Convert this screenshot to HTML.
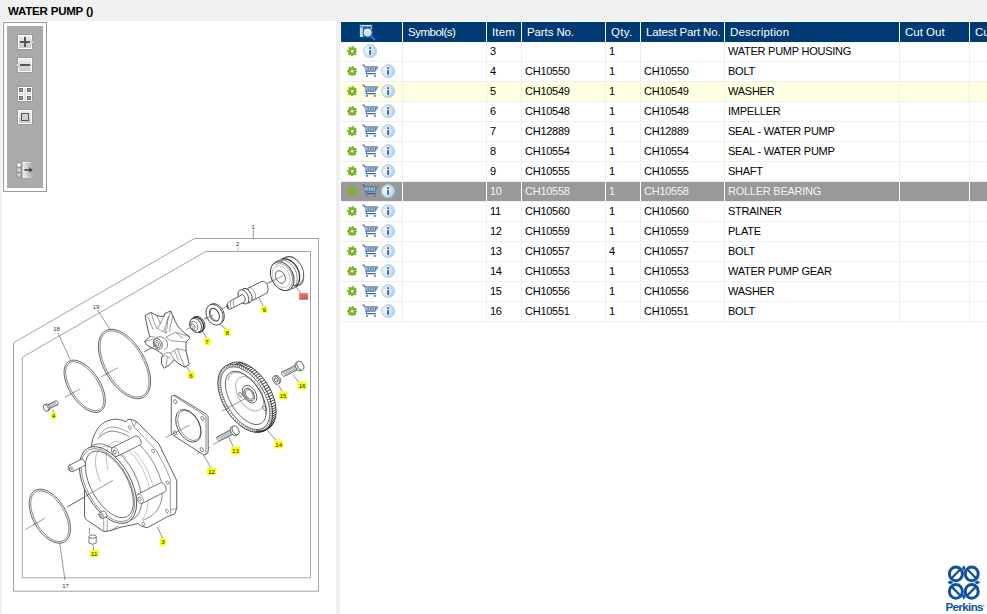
<!DOCTYPE html>
<html lang="en">
<head>
<meta charset="utf-8">
<title>WATER PUMP ()</title>
<style>
html,body{margin:0;padding:0;}
body{width:987px;height:614px;overflow:hidden;background:#f0f0f0;position:relative;font-family:"Liberation Sans",sans-serif;font-size:11px;color:#000;}
#title{position:absolute;left:8px;top:3px;height:16px;line-height:16px;font-size:11.5px;font-weight:bold;color:#000;white-space:nowrap;letter-spacing:-0.2px;}
#left{position:absolute;left:2px;top:21px;width:334px;height:593px;background:#fff;overflow:hidden;}
#right{position:absolute;left:340px;top:21px;width:647px;height:593px;background:#fff;overflow:hidden;}
#grid{position:absolute;left:1px;top:1px;width:660px;height:300px;}
.hrow{position:absolute;left:0;top:0;height:20px;width:660px;}
.hc{position:absolute;top:0;height:20px;background:#003a73;color:#fff;font-size:11.5px;line-height:20px;white-space:nowrap;overflow:hidden;}
.hc span{position:absolute;left:5px;top:0;}
.row{position:absolute;left:0;height:19px;width:660px;border-bottom:1px solid #efefef;background:#fff;}
.row.hov{background:#ffffe1;}
.row.sel{background:#999;color:#f4f4f4;}
.c{position:absolute;top:0;height:19px;line-height:19px;border-right:1px solid #efefef;white-space:nowrap;overflow:hidden;}
.row.sel .c{border-right-color:#fff;}
.c span{position:absolute;left:3px;top:0;letter-spacing:-0.25px;}
.c0 svg{position:absolute;}
.ic-gear{left:5.5px;top:3.5px;}
.ic-cart{left:21px;top:1.5px;}
.ic-info{left:39.5px;top:1.5px;}
.ic-info.nocart{left:21.5px;}
.ic-find{position:absolute;left:18px;top:2px;}
#toolbar{position:absolute;left:0;top:0;}
#diagram{position:absolute;left:0;top:0;}
#logo{position:absolute;left:600px;top:539px;}

</style>
</head>
<body>
<svg width="0" height="0" style="position:absolute"><defs><radialGradient id="g-info" cx="0.35" cy="0.45" r="0.7"><stop offset="0" stop-color="#f6fafd"/><stop offset="0.5" stop-color="#d9e7f4"/><stop offset="1" stop-color="#a2c6e6"/></radialGradient></defs></svg>
<div id="title">WATER PUMP ()</div>
<div id="left">
<svg id="toolbar" width="46" height="172" viewBox="2 21 46 172">
<defs>
<linearGradient id="g-btn" x1="0" y1="0" x2="0" y2="1"><stop offset="0" stop-color="#ededed"/><stop offset="1" stop-color="#c9c9c9"/></linearGradient>
<linearGradient id="g-exp" x1="0" y1="0" x2="1" y2="0"><stop offset="0" stop-color="#f2f2f2"/><stop offset="0.45" stop-color="#cfcfcf"/><stop offset="1" stop-color="#aaaaaa"/></linearGradient>
<linearGradient id="g-expl" x1="0" y1="0" x2="1" y2="0"><stop offset="0" stop-color="#ffffff"/><stop offset="0.55" stop-color="#e6e6e6"/><stop offset="1" stop-color="#aaaaaa"/></linearGradient>
</defs>
<rect x="3.5" y="22.5" width="43" height="169" fill="#fff" stroke="#999"/>
<rect x="7" y="26" width="36" height="162" fill="#aaa"/>
<!-- plus -->
<rect x="17.5" y="34.5" width="15" height="15" rx="1" fill="#8a8a8a"/>
<rect x="18" y="35" width="14" height="14" fill="#fff"/>
<rect x="19" y="36" width="12" height="12" fill="url(#g-btn)"/>
<rect x="20" y="41" width="10" height="2" fill="#555"/>
<rect x="24" y="37" width="2" height="10" fill="#555"/>
<path d="M32 39.6 L34.3 42 L32 44.4Z" fill="#f4f4f4" stroke="#8a8a8a" stroke-width="0.7"/>
<!-- minus -->
<rect x="17.5" y="57.5" width="15" height="15" rx="1" fill="#8a8a8a"/>
<rect x="18" y="58" width="14" height="14" fill="#fff"/>
<rect x="19" y="59" width="12" height="12" fill="url(#g-btn)"/>
<rect x="20" y="64" width="10" height="2" fill="#555"/>
<path d="M18 62.6 L15.7 65 L18 67.4Z" fill="#f4f4f4" stroke="#8a8a8a" stroke-width="0.7"/>
<!-- grid -->
<rect x="17.5" y="86.5" width="15" height="15" rx="1" fill="#8a8a8a"/>
<rect x="18" y="87" width="14" height="14" fill="#fff"/>
<rect x="24" y="88" width="2" height="12" fill="#e2e2e2"/>
<rect x="19" y="93" width="12" height="2" fill="#e2e2e2"/>
<g fill="#999" stroke="#6e6e6e" stroke-width="1">
<rect x="19.5" y="88.5" width="3" height="3"/><rect x="27.5" y="88.5" width="3" height="3"/>
<rect x="19.5" y="96.5" width="3" height="3"/><rect x="27.5" y="96.5" width="3" height="3"/>
</g>
<!-- square -->
<rect x="17.5" y="109.5" width="15" height="15" rx="1" fill="#8a8a8a"/>
<rect x="18" y="110" width="14" height="14" fill="#fff"/>
<rect x="19" y="111" width="12" height="12" fill="url(#g-btn)"/>
<rect x="21.5" y="113.5" width="7" height="7" fill="#d0d0d0" stroke="#555" stroke-width="1"/>
<!-- export -->
<rect x="22" y="162" width="11" height="15.5" fill="url(#g-exp)"/>
<path d="M33 162.5 H22.5 V177 H33" fill="none" stroke="url(#g-expl)" stroke-width="1"/>
<path d="M22 162V178" stroke="#888" stroke-width="1"/>
<g stroke="#8a8a8a" stroke-width="0.8">
<rect x="16.9" y="162.9" width="4.2" height="4.2" fill="#f4f4f4"/>
<rect x="16.9" y="167.9" width="4.2" height="4.2" fill="#d6d6d6"/>
<rect x="16.9" y="172.9" width="4.2" height="4.2" fill="#d0d0d0"/>
</g>
<path d="M24.3 169.9 H30.5" stroke="#444" stroke-width="1.6"/>
<path d="M29.3 167 L32.8 169.9 L29.3 172.8Z" fill="#444"/>
</svg>

<svg id="diagram" width="334" height="593" viewBox="2 21 334 593" font-family="'Liberation Sans',sans-serif">
<g fill="none" stroke="#989898" stroke-width="0.9">
<path d="M13.5 591.2 V342.8 L194.4 238.5 H318.5 V591.2 Z"/>
<path d="M22.3 577.8 V357.3 L205.7 251.5 H310.5 V577.8 Z"/>
</g>
<path d="M253.4 230.0 L253.4 238.5" fill="none" stroke="#555" stroke-width="0.6"/>
<path d="M237.8 246.5 L237.8 251.5" fill="none" stroke="#999" stroke-width="0.6"/>
<text x="253.2" y="229.4" text-anchor="middle" font-size="6" fill="#333">1</text>
<text x="237.6" y="245.8" text-anchor="middle" font-size="6" fill="#333">2</text>
<path d="M65.0 397.3 L80.2 388.9" fill="none" stroke="#555" stroke-width="0.6"/>
<path d="M101.4 376.8 L117.9 367.7" fill="none" stroke="#555" stroke-width="0.6"/>
<path d="M144.3 351.8 L157.0 344.8" fill="none" stroke="#555" stroke-width="0.6"/>
<path d="M25.2 529.7 L44.9 518.2" fill="none" stroke="#555" stroke-width="0.6"/>
<path d="M67.1 507.0 L113.7 480.6" fill="none" stroke="#555" stroke-width="0.6"/>
<path d="M204.0 318.5 L214.0 313.5" fill="none" stroke="#555" stroke-width="0.6"/>
<path d="M222.5 308.5 L228.5 305.5" fill="none" stroke="#555" stroke-width="0.6"/>
<path d="M267.0 283.5 L284.0 274.5" fill="none" stroke="#555" stroke-width="0.6"/>
<path d="M190.0 328.0 L199.0 323.5" fill="none" stroke="#555" stroke-width="0.6"/>
<path d="M197.0 453.5 L210.0 447.5" fill="none" stroke="#555" stroke-width="0.6"/>
<path d="M213.0 444.5 L219.0 441.5" fill="none" stroke="#555" stroke-width="0.6"/>
<path d="M275.5 381.5 L281.5 378.0" fill="none" stroke="#555" stroke-width="0.6"/>
<path d="M89.5 528.0 L89.5 534.0" fill="none" stroke="#555" stroke-width="0.6"/>
<ellipse cx="124.5" cy="364.0" rx="38.4" ry="20.5" transform="rotate(60.0 124.5 364.0)" fill="none" stroke="#3a3a3a" stroke-width="0.7" />
<ellipse cx="124.5" cy="364.0" rx="36.7" ry="18.8" transform="rotate(60.0 124.5 364.0)" fill="none" stroke="#3a3a3a" stroke-width="0.55" />
<ellipse cx="84.7" cy="386.3" rx="29.6" ry="15.4" transform="rotate(57.0 84.7 386.3)" fill="none" stroke="#3a3a3a" stroke-width="0.7" />
<ellipse cx="84.7" cy="386.3" rx="27.9" ry="13.7" transform="rotate(57.0 84.7 386.3)" fill="none" stroke="#3a3a3a" stroke-width="0.55" />
<ellipse cx="49.8" cy="516.2" rx="29.7" ry="16.7" transform="rotate(60.0 49.8 516.2)" fill="none" stroke="#3a3a3a" stroke-width="0.7" />
<ellipse cx="49.8" cy="516.2" rx="28.0" ry="15.0" transform="rotate(60.0 49.8 516.2)" fill="none" stroke="#3a3a3a" stroke-width="0.55" />
<path d="M58.0 333.0 L70.2 359.4" fill="none" stroke="#555" stroke-width="0.6"/>
<path d="M97.5 310.0 L110.5 330.2" fill="none" stroke="#555" stroke-width="0.6"/>
<path d="M59.7 543.0 L65.0 580.0" fill="none" stroke="#555" stroke-width="0.6"/>
<text x="56.5" y="331.0" text-anchor="middle" font-size="6" fill="#333">18</text>
<text x="96.0" y="308.6" text-anchor="middle" font-size="6" fill="#333">19</text>
<text x="65.6" y="588.4" text-anchor="middle" font-size="6" fill="#333">17</text>
<path d="M49.6 408.6 L58.1 404.6 Q58.3 402.1 56.3 400.6 L47.8 404.7" fill="#fff" stroke="#3a3a3a" stroke-width="0.7" stroke-linejoin="round" />
<path d="M56.9 405.1 L54.6 401.5" fill="none" stroke="#444" stroke-width="0.5"/>
<path d="M55.8 405.7 L53.4 402.0" fill="none" stroke="#444" stroke-width="0.5"/>
<path d="M54.6 406.2 L52.2 402.6" fill="none" stroke="#444" stroke-width="0.5"/>
<path d="M53.4 406.8 L51.0 403.1" fill="none" stroke="#444" stroke-width="0.5"/>
<path d="M52.3 407.3 L49.9 403.7" fill="none" stroke="#444" stroke-width="0.5"/>
<path d="M51.1 407.9 L48.7 404.2" fill="none" stroke="#444" stroke-width="0.5"/>
<ellipse cx="47.2" cy="407.3" rx="2.2" ry="3.6" transform="rotate(154.7 47.2 407.3)" fill="#fff" stroke="#3a3a3a" stroke-width="0.7" />
<ellipse cx="45.8" cy="408.0" rx="2.2" ry="3.6" transform="rotate(154.7 45.8 408.0)" fill="#fff" stroke="#3a3a3a" stroke-width="0.7" />
<path d="M295.9 365.1 L281.5 372.2 Q281.5 374.9 283.7 376.6 L298.1 369.5" fill="#fff" stroke="#3a3a3a" stroke-width="0.7" stroke-linejoin="round" />
<path d="M282.7 371.6 L285.4 375.8" fill="none" stroke="#444" stroke-width="0.5"/>
<path d="M283.8 371.0 L286.6 375.2" fill="none" stroke="#444" stroke-width="0.5"/>
<path d="M285.0 370.4 L287.7 374.6" fill="none" stroke="#444" stroke-width="0.5"/>
<path d="M286.2 369.9 L288.9 374.1" fill="none" stroke="#444" stroke-width="0.5"/>
<path d="M287.3 369.3 L290.1 373.5" fill="none" stroke="#444" stroke-width="0.5"/>
<path d="M288.5 368.7 L291.2 372.9" fill="none" stroke="#444" stroke-width="0.5"/>
<path d="M289.7 368.1 L292.4 372.3" fill="none" stroke="#444" stroke-width="0.5"/>
<path d="M290.8 367.6 L293.6 371.7" fill="none" stroke="#444" stroke-width="0.5"/>
<path d="M292.0 367.0 L294.7 371.2" fill="none" stroke="#444" stroke-width="0.5"/>
<path d="M293.2 366.4 L295.9 370.6" fill="none" stroke="#444" stroke-width="0.5"/>
<path d="M294.3 365.8 L297.1 370.0" fill="none" stroke="#444" stroke-width="0.5"/>
<ellipse cx="298.7" cy="366.4" rx="3.0" ry="4.8" transform="rotate(-26.3 298.7 366.4)" fill="#fff" stroke="#3a3a3a" stroke-width="0.7" />
<ellipse cx="300.4" cy="365.6" rx="3.0" ry="4.8" transform="rotate(-26.3 300.4 365.6)" fill="#fff" stroke="#3a3a3a" stroke-width="0.7" />
<path d="M231.1 429.7 L216.7 437.0 Q216.7 439.7 218.9 441.4 L233.3 434.1" fill="#fff" stroke="#3a3a3a" stroke-width="0.7" stroke-linejoin="round" />
<path d="M217.8 436.4 L220.6 440.6" fill="none" stroke="#444" stroke-width="0.5"/>
<path d="M219.0 435.8 L221.8 440.0" fill="none" stroke="#444" stroke-width="0.5"/>
<path d="M220.2 435.2 L222.9 439.4" fill="none" stroke="#444" stroke-width="0.5"/>
<path d="M221.3 434.6 L224.1 438.8" fill="none" stroke="#444" stroke-width="0.5"/>
<path d="M222.5 434.1 L225.3 438.2" fill="none" stroke="#444" stroke-width="0.5"/>
<path d="M223.6 433.5 L226.4 437.6" fill="none" stroke="#444" stroke-width="0.5"/>
<path d="M224.8 432.9 L227.6 437.0" fill="none" stroke="#444" stroke-width="0.5"/>
<path d="M226.0 432.3 L228.7 436.4" fill="none" stroke="#444" stroke-width="0.5"/>
<path d="M227.1 431.7 L229.9 435.9" fill="none" stroke="#444" stroke-width="0.5"/>
<path d="M228.3 431.1 L231.1 435.3" fill="none" stroke="#444" stroke-width="0.5"/>
<path d="M229.4 430.5 L232.2 434.7" fill="none" stroke="#444" stroke-width="0.5"/>
<ellipse cx="233.9" cy="431.1" rx="3.0" ry="4.8" transform="rotate(-26.8 233.9 431.1)" fill="#fff" stroke="#3a3a3a" stroke-width="0.7" />
<ellipse cx="235.6" cy="430.2" rx="3.0" ry="4.8" transform="rotate(-26.8 235.6 430.2)" fill="#fff" stroke="#3a3a3a" stroke-width="0.7" />
<ellipse cx="277.2" cy="379.6" rx="2.9" ry="4.4" transform="rotate(-25.0 277.2 379.6)" fill="#fff" stroke="#3a3a3a" stroke-width="0.7" />
<ellipse cx="276.0" cy="380.2" rx="2.9" ry="4.4" transform="rotate(-25.0 276.0 380.2)" fill="#fff" stroke="#3a3a3a" stroke-width="0.7" />
<ellipse cx="276.0" cy="380.2" rx="1.4" ry="2.3" transform="rotate(-25.0 276.0 380.2)" fill="none" stroke="#3a3a3a" stroke-width="0.7" />
<path d="M274.4 262.8 L284.6 257.4 Q293.8 253.6 300.2 264.4 Q306 276.2 302 283.8 L291.4 289.4" fill="#fff" stroke="#3a3a3a" stroke-width="0.8" stroke-linejoin="round" />
<ellipse cx="292.0" cy="271.1" rx="10.8" ry="15.2" transform="rotate(-27.0 292.0 271.1)" fill="#fff" stroke="#3a3a3a" stroke-width="0.7" />
<path d="M282.7 259.1 L283.8 258.9 L285.0 258.9 L286.2 259.0 L287.5 259.3 L288.7 259.8 L289.9 260.4 L291.1 261.1 L292.3 262.0 L293.4 263.0 L294.5 264.1 L295.5 265.3 L296.4 266.6 L297.2 267.9 L297.9 269.4 L298.5 270.8 L299.0 272.3 L299.3 273.8 L299.5 275.3 L299.6 276.8 L299.6 278.2 L299.4 279.6 L299.2 281.0 L298.8 282.2 L298.2 283.3 L297.6 284.3 L296.8 285.3 L296.0 286.0" fill="none" stroke="#3a3a3a" stroke-width="1.3"/>
<path d="M280.3 260.3 L281.4 260.1 L282.6 260.1 L283.8 260.2 L285.1 260.5 L286.3 261.0 L287.5 261.6 L288.7 262.3 L289.9 263.2 L291.0 264.2 L292.1 265.3 L293.1 266.5 L294.0 267.8 L294.8 269.1 L295.5 270.6 L296.1 272.0 L296.6 273.5 L296.9 275.0 L297.1 276.5 L297.2 278.0 L297.2 279.4 L297.0 280.8 L296.8 282.2 L296.4 283.4 L295.8 284.5 L295.2 285.5 L294.4 286.5 L293.6 287.2" fill="none" stroke="#3a3a3a" stroke-width="0.6"/>
<ellipse cx="282.2" cy="276.2" rx="10.8" ry="15.2" transform="rotate(-27.0 282.2 276.2)" fill="#fff" stroke="#3a3a3a" stroke-width="0.9" />
<path d="M275.7 264.8 L276.5 264.3 L277.5 263.9 L278.4 263.7 L279.5 263.6 L280.5 263.7 L281.6 263.9 L282.7 264.3 L283.8 264.7 L284.9 265.4 L285.9 266.1 L286.9 267.0 L287.9 267.9 L288.8 269.0 L289.6 270.1 L290.4 271.4 L291.0 272.6 L291.5 273.9 L292.0 275.3 L292.3 276.6 L292.5 277.9 L292.6 279.3 L292.6 280.5 L292.5 281.8 L292.3 283.0 L291.9 284.1 L291.4 285.1 L290.9 286.0 L290.2 286.8 L289.4 287.4 L288.6 288.0 L287.7 288.4" fill="none" stroke="#3a3a3a" stroke-width="0.5"/>
<ellipse cx="281.2" cy="276.7" rx="8.2" ry="11.6" transform="rotate(-27.0 281.2 276.7)" fill="none" stroke="#777" stroke-width="0.4" />
<ellipse cx="280.4" cy="277.0" rx="4.6" ry="6.6" transform="rotate(-27.0 280.4 277.0)" fill="none" stroke="#3a3a3a" stroke-width="0.7" />
<path d="M267.6 283.6 L283.6 275.3" fill="none" stroke="#555" stroke-width="0.6"/>
<path d="M247.6 288.5 L261.4 281.5 Q265.6 280.6 267.6 285.4 Q269 290.4 267.1 292.9 L252.5 300.6 Z" fill="#fff" stroke="#3a3a3a" stroke-width="0.8" stroke-linejoin="round" />
<ellipse cx="246.6" cy="295.5" rx="4.7" ry="7.6" transform="rotate(-27.0 246.6 295.5)" fill="#fff" stroke="#3a3a3a" stroke-width="0.8" />
<path d="M243.2 289.0 L246.4 288.3 M247.6 303.3 L250.4 302.1" fill="none" stroke="#3a3a3a" stroke-width="0.7" stroke-linejoin="round" />
<ellipse cx="243.4" cy="296.9" rx="4.7" ry="7.6" transform="rotate(-27.0 243.4 296.9)" fill="#fff" stroke="#3a3a3a" stroke-width="0.8" />
<path d="M248.7 287.2 L249.2 287.2 L249.8 287.4 L250.3 287.6 L250.8 287.9 L251.4 288.2 L251.9 288.6 L252.4 289.1 L252.9 289.6 L253.4 290.2 L253.8 290.8 L254.2 291.4 L254.5 292.1 L254.8 292.8 L255.1 293.5 L255.3 294.2 L255.4 294.9 L255.5 295.6 L255.6 296.2 L255.6 296.9 L255.5 297.5 L255.4 298.1 L255.2 298.6 L254.9 299.1 L254.6 299.5 L254.3 299.9" fill="none" stroke="#3a3a3a" stroke-width="0.5"/>
<path d="M242.6 294.4 L229 301.7 Q227 303.2 226.7 306 Q227.2 309.6 229.9 309.3 L245.0 301.6 Q246.4 297.4 242.6 294.4Z" fill="#fff" stroke="#3a3a3a" stroke-width="0.8" stroke-linejoin="round" />
<path d="M230.8 302 Q229.6 305.6 231.6 308.5 M233.6 300.6 Q232.6 304 234.4 307" fill="none" stroke="#3a3a3a" stroke-width="0.5" stroke-linejoin="round" />
<path d="M227.2 304.6 L228.6 308.6" fill="none" stroke="#3a3a3a" stroke-width="1.2" stroke-linejoin="round" />
<ellipse cx="215.8" cy="314.0" rx="8.0" ry="10.9" transform="rotate(-25.0 215.8 314.0)" fill="#fff" stroke="#3a3a3a" stroke-width="0.8" />
<ellipse cx="214.5" cy="314.7" rx="8.0" ry="10.9" transform="rotate(-25.0 214.5 314.7)" fill="#fff" stroke="#3a3a3a" stroke-width="0.8" />
<ellipse cx="214.4" cy="314.7" rx="4.5" ry="6.8" transform="rotate(-25.0 214.4 314.7)" fill="none" stroke="#3a3a3a" stroke-width="0.9" />
<path d="M217.4 320.5 L216.9 320.6 L216.4 320.5 L215.9 320.4 L215.3 320.3 L214.8 320.0 L214.3 319.7 L213.8 319.4 L213.3 319.0 L212.8 318.5 L212.4 318.0 L212.0 317.4 L211.6 316.8 L211.3 316.2 L211.0 315.5 L210.8 314.8 L210.6 314.2 L210.5 313.5 L210.4 312.8 L210.4 312.2 L210.5 311.6 L210.6 311.0 L210.7 310.4 L210.9 309.9 L211.2 309.5 L211.5 309.1 L211.9 308.7" fill="none" stroke="#3a3a3a" stroke-width="0.6"/>
<path d="M204.5 319.6 L213.5 315.0" fill="none" stroke="#555" stroke-width="0.6"/>
<ellipse cx="198.6" cy="324.0" rx="5.9" ry="8.0" transform="rotate(-27.0 198.6 324.0)" fill="#fff" stroke="#3a3a3a" stroke-width="0.8" />
<ellipse cx="197.2" cy="324.7" rx="5.9" ry="8.0" transform="rotate(-27.0 197.2 324.7)" fill="#fff" stroke="#3a3a3a" stroke-width="1.4" />
<ellipse cx="195.6" cy="325.4" rx="5.5" ry="7.4" transform="rotate(-27.0 195.6 325.4)" fill="#fff" stroke="#3a3a3a" stroke-width="0.8" />
<ellipse cx="194.0" cy="326.0" rx="3.6" ry="4.9" transform="rotate(-27.0 194.0 326.0)" fill="#fff" stroke="#3a3a3a" stroke-width="0.6" />
<ellipse cx="192.6" cy="326.6" rx="2.3" ry="3.1" transform="rotate(-27.0 192.6 326.6)" fill="#fff" stroke="#3a3a3a" stroke-width="0.6" />
<ellipse cx="191.8" cy="327.0" rx="1.3" ry="1.8" transform="rotate(-27.0 191.8 327.0)" fill="#fff" stroke="#3a3a3a" stroke-width="0.5" />
<path d="M186.5 329.6 L191.0 327.0" fill="none" stroke="#555" stroke-width="0.6"/>
<path d="M145.1 315.4 L151.1 312.4 L157.1 315.9 L163.6 316.5 L165.3 313.2 L170.7 311 L172.9 315.9 Q175 322 178.4 326.8 Q183 332.6 189.3 336.6 L189.8 338.3 L186 342.1 L186 350.8 L189.3 364.5 L184.9 367.2 Q178.6 364.6 174 359.5 L170.7 363.9 L164.2 368.3 L161.5 363.9 L161.5 357.4 L163.1 354.6 L156.6 350 L152.2 348.1 L147.3 345.4 L144.5 341.5 L150 336.6 L148.9 333.9 L146.2 321.4 Z" fill="#fff" stroke="#3a3a3a" stroke-width="0.85" stroke-linejoin="round" />
<path d="M151.1 312.4 L153.6 321 L157.1 329 M146.6 316.6 L148.6 318 L153 329.6 M157.1 315.9 L160.6 324 M165.3 313.2 L161.4 321.4 L157.6 328.5 L163.4 332 M170.7 311 L167.6 321 L166.9 329 M168.5 316 L165.7 326 L164.8 329 M172.9 315.9 L170.4 326 L169.6 332 M165.8 337.2 L175.6 332.3 L189.3 336.6 M165.8 337.2 L170.7 340.6 L186 342.1 M175.6 332.3 L183 338.6 M170.2 353 L177.3 348.6 L186 350.8 M177.3 348.6 L181 358 L184.9 367.2 M174.6 350.4 L178.4 360.6 M144.5 341.5 L150.4 340 L153.4 338.4 M150 336.6 L154.6 337 M163.1 354.6 L167 352.4 L170.2 353 L174 359.5 M161.5 357.4 L165.6 355.8 L170.6 358.2 M167.4 357 L166 366.6" fill="none" stroke="#3a3a3a" stroke-width="0.5" stroke-linejoin="round" />
<path d="M153.3 339.9 Q156 336.6 159.8 336.6 Q164.6 337.4 166.4 340 Q168 344 167.5 346.5 Q166.4 349 164.2 349.7" fill="none" stroke="#3a3a3a" stroke-width="0.6" stroke-linejoin="round" />
<ellipse cx="157.8" cy="343.9" rx="4.1" ry="5.6" transform="rotate(-27.0 157.8 343.9)" fill="#fff" stroke="#3a3a3a" stroke-width="0.7" />
<ellipse cx="157.4" cy="344.1" rx="2.7" ry="3.8" transform="rotate(-27.0 157.4 344.1)" fill="#fff" stroke="#3a3a3a" stroke-width="0.6" />
<ellipse cx="157.2" cy="344.2" rx="1.3" ry="2.0" transform="rotate(-27.0 157.2 344.2)" fill="none" stroke="#3a3a3a" stroke-width="0.6" />
<ellipse cx="165.3" cy="331.2" rx="1.2" ry="1.8" transform="rotate(-27.0 165.3 331.2)" fill="none" stroke="#3a3a3a" stroke-width="0.6" />
<path d="M144.3 351.8 L156.0 345.2" fill="none" stroke="#555" stroke-width="0.6"/>
<path d="M171.3 397.4 Q171.2 395.4 173.6 395.6 L175.5 395.4 L206.6 414.4 Q208.2 415.4 208.1 417.4 L208.2 451.4 Q208.1 453.2 206 454.4 L203.9 455 L172.6 435 Q171.2 434 171.2 432 Z" fill="#fff" stroke="#3a3a3a" stroke-width="0.8" stroke-linejoin="round" />
<path d="M173.6 395.6 L204.6 415.2 Q206 416.3 206 418 L206 454.2" fill="none" stroke="#3a3a3a" stroke-width="0.6" stroke-linejoin="round" />
<ellipse cx="188.4" cy="425.8" rx="17.6" ry="11.0" transform="rotate(62.0 188.4 425.8)" fill="none" stroke="#3a3a3a" stroke-width="0.8" />
<ellipse cx="189.2" cy="425.5" rx="16.2" ry="9.8" transform="rotate(62.0 189.2 425.5)" fill="none" stroke="#3a3a3a" stroke-width="0.5" />
<ellipse cx="175.2" cy="401.7" rx="1.4" ry="2.2" transform="rotate(-25.0 175.2 401.7)" fill="none" stroke="#3a3a3a" stroke-width="0.6" />
<ellipse cx="202.4" cy="418.3" rx="1.4" ry="2.2" transform="rotate(-25.0 202.4 418.3)" fill="none" stroke="#3a3a3a" stroke-width="0.6" />
<ellipse cx="175.0" cy="432.7" rx="1.4" ry="2.2" transform="rotate(-25.0 175.0 432.7)" fill="none" stroke="#3a3a3a" stroke-width="0.6" />
<ellipse cx="201.8" cy="449.6" rx="1.4" ry="2.2" transform="rotate(-25.0 201.8 449.6)" fill="none" stroke="#3a3a3a" stroke-width="0.6" />
<path d="M165.3 437.8 L189.6 425.1" fill="none" stroke="#555" stroke-width="0.6"/>
<ellipse cx="248.8" cy="396.2" rx="37.8" ry="22.2" transform="rotate(58.5 248.8 396.2)" fill="#fff" stroke="#3a3a3a" stroke-width="0.8" />
<ellipse cx="245.2" cy="398.2" rx="37.8" ry="22.2" transform="rotate(58.5 245.2 398.2)" fill="#fff" stroke="#3a3a3a" stroke-width="0.8" />
<path d="M265.0 430.4L263.4 427.9M263.5 431.2L262.1 428.5M261.9 431.8L260.7 429.1M260.2 432.2L259.2 429.4M258.5 432.4L257.7 429.5M256.7 432.4L256.1 429.5M254.8 432.3L254.4 429.3M252.8 431.9L252.7 429.0M250.9 431.4L250.9 428.4M248.8 430.6L249.1 427.7M246.8 429.7L247.3 426.8M244.8 428.6L245.4 425.8M242.7 427.4L243.6 424.6M240.7 425.9L241.8 423.3M238.7 424.4L240.0 421.8M236.7 422.6L238.2 420.2M234.8 420.8L236.4 418.5M232.9 418.8L234.8 416.6M231.1 416.7L233.1 414.7M229.4 414.5L231.6 412.6M227.8 412.2L230.1 410.5M226.3 409.8L228.7 408.3M224.8 407.4L227.3 406.1M223.5 404.9L226.1 403.8M222.4 402.3L225.0 401.5M221.3 399.8L224.0 399.1M220.4 397.2L223.2 396.8M219.6 394.7L222.4 394.5M218.9 392.1L221.8 392.1M218.4 389.6L221.3 389.9M218.1 387.2L220.9 387.6M217.9 384.8L220.7 385.4M217.8 382.5L220.6 383.3M218.0 380.2L220.7 381.3M218.2 378.1L220.9 379.4M218.6 376.1L221.2 377.6M219.2 374.2L221.6 375.9M219.9 372.4L222.2 374.3M220.7 370.8L222.9 372.8M221.7 369.4L223.8 371.5M222.8 368.1L224.8 370.4M224.1 366.9L225.8 369.4M225.4 366.0L227.0 368.5M226.9 365.2L228.3 367.9M228.5 364.6L229.7 367.3M230.2 364.2L231.2 367.0M231.9 364.0L232.7 366.9M233.7 364.0L234.3 366.9M235.6 364.1L236.0 367.1M237.6 364.5L237.7 367.4M239.5 365.0L239.5 368.0M241.6 365.8L241.3 368.7M243.6 366.7L243.1 369.6M245.6 367.8L245.0 370.6M247.7 369.0L246.8 371.8M249.7 370.5L248.6 373.1M251.7 372.0L250.4 374.6M253.7 373.8L252.2 376.2M255.6 375.6L254.0 377.9M257.5 377.6L255.6 379.8M259.3 379.7L257.3 381.7M261.0 381.9L258.8 383.8M262.6 384.2L260.3 385.9M264.1 386.6L261.7 388.1M265.6 389.0L263.1 390.3M266.9 391.5L264.3 392.6M268.0 394.1L265.4 394.9M269.1 396.6L266.4 397.3M270.0 399.2L267.2 399.6M270.8 401.7L268.0 401.9M271.5 404.3L268.6 404.3M272.0 406.8L269.1 406.5M272.3 409.2L269.5 408.8M272.5 411.6L269.7 411.0M272.6 413.9L269.8 413.1M272.4 416.2L269.7 415.1M272.2 418.3L269.5 417.0M271.8 420.3L269.2 418.8M271.2 422.2L268.8 420.5M270.5 424.0L268.2 422.1M269.7 425.6L267.5 423.6M268.7 427.0L266.6 424.9M267.6 428.3L265.6 426.0M266.3 429.5L264.6 427.0" fill="none" stroke="#333" stroke-width="0.6" stroke-linejoin="round" />
<path d="M265.0 430.4L268.6 428.4M263.5 431.2L267.1 429.2M261.9 431.8L265.5 429.8M260.2 432.2L263.8 430.2M258.5 432.4L262.1 430.4M256.7 432.4L260.3 430.4M254.8 432.3L258.4 430.3M235.6 364.1L239.2 362.1M237.6 364.5L241.2 362.5M239.5 365.0L243.1 363.0M241.6 365.8L245.2 363.8M243.6 366.7L247.2 364.7M245.6 367.8L249.2 365.8M247.7 369.0L251.3 367.0M249.7 370.5L253.3 368.5M251.7 372.0L255.3 370.0M253.7 373.8L257.3 371.8M255.6 375.6L259.2 373.6M257.5 377.6L261.1 375.6M259.3 379.7L262.9 377.7M261.0 381.9L264.6 379.9M262.6 384.2L266.2 382.2M264.1 386.6L267.7 384.6M265.6 389.0L269.2 387.0M266.9 391.5L270.5 389.5M268.0 394.1L271.6 392.1M269.1 396.6L272.7 394.6M270.0 399.2L273.6 397.2M270.8 401.7L274.4 399.7M271.5 404.3L275.1 402.3M272.0 406.8L275.6 404.8M272.3 409.2L275.9 407.2M272.5 411.6L276.1 409.6M272.6 413.9L276.2 411.9M272.4 416.2L276.0 414.2M272.2 418.3L275.8 416.3M271.8 420.3L275.4 418.3M271.2 422.2L274.8 420.2M270.5 424.0L274.1 422.0M269.7 425.6L273.3 423.6M268.7 427.0L272.3 425.0M267.6 428.3L271.2 426.3M266.3 429.5L269.9 427.5" fill="none" stroke="#1a1a1a" stroke-width="0.85" stroke-linejoin="round" />
<ellipse cx="245.2" cy="398.2" rx="34.8" ry="19.4" transform="rotate(58.5 245.2 398.2)" fill="none" stroke="#3a3a3a" stroke-width="0.6" />
<ellipse cx="245.8" cy="397.9" rx="29.8" ry="15.6" transform="rotate(58.5 245.8 397.9)" fill="none" stroke="#3a3a3a" stroke-width="0.7" />
<path d="M227.9 380.3 L228.3 378.5 L229.0 376.9 L229.8 375.4 L230.9 374.3 L232.1 373.4 L233.4 372.7 L234.9 372.3 L236.6 372.2 L238.3 372.4 L240.2 372.8 L242.1 373.5 L244.1 374.5 L246.1 375.7 L248.1 377.2 L250.1 378.9 L252.0 380.7 L253.9 382.8 L255.7 385.0 L257.5 387.4 L259.1 389.9 L260.6 392.4 L261.9 395.0 L263.0 397.7 L264.0 400.3 L264.8 402.9 L265.4 405.4 L265.8 407.9 L266.0 410.2 L265.9 412.4 L265.7 414.5" fill="none" stroke="#3a3a3a" stroke-width="0.5"/>
<ellipse cx="249.6" cy="393.8" rx="19.0" ry="11.6" transform="rotate(58.5 249.6 393.8)" fill="none" stroke="#555" stroke-width="0.45" />
<ellipse cx="249.6" cy="394.2" rx="9.6" ry="6.2" transform="rotate(58.5 249.6 394.2)" fill="none" stroke="#3a3a3a" stroke-width="0.7" />
<ellipse cx="249.2" cy="394.6" rx="7.0" ry="4.4" transform="rotate(58.5 249.2 394.6)" fill="none" stroke="#3a3a3a" stroke-width="0.8" />
<ellipse cx="249.4" cy="394.5" rx="5.2" ry="3.2" transform="rotate(58.5 249.4 394.5)" fill="none" stroke="#3a3a3a" stroke-width="0.6" />
<ellipse cx="240.4" cy="394.5" rx="1.5" ry="2.4" transform="rotate(-27.0 240.4 394.5)" fill="none" stroke="#3a3a3a" stroke-width="0.6" />
<ellipse cx="264.6" cy="408.3" rx="1.5" ry="2.4" transform="rotate(-27.0 264.6 408.3)" fill="none" stroke="#3a3a3a" stroke-width="0.6" />
<path d="M221.4 411.4 L248.0 397.0" fill="none" stroke="#555" stroke-width="0.6"/>
<path d="M125.9 421.7 L127.6 419.6 L130.8 419.2 L136.6 421.7 L159.1 444.2 L170.8 468.6 L176.7 480.4 L176.7 508.6 L174.7 514 L166.9 516.9 L147.4 527.7 L141.5 526.2 L138.2 523.6 L120 527.4 L110.3 530.8 L103.7 531.5 L89.5 521.8 Q84.6 519.6 84.5 515 L84.5 488 L92.5 439.3 C94.5 434 96.5 430 99.3 426.6 C102.5 423.2 105.5 421.3 109.1 420.3 C112 419.4 114.5 419.1 116.9 419.3 C120 419.6 123 420.5 125.9 421.7 Z" fill="#fff" stroke="#3a3a3a" stroke-width="0.8" stroke-linejoin="round" />
<path d="M130.8 419.2 L133.7 426.6 L156.2 450.1 L166 468.6 L170.3 479.4 L170.3 510.4 L174.7 508.9 M170.3 510.4 L171 515.4 M136.6 421.7 L133.7 426.6" fill="none" stroke="#3a3a3a" stroke-width="0.5" stroke-linejoin="round" />
<path d="M174.9 509 L176.6 508.2" fill="none" stroke="#3a3a3a" stroke-width="0.6" stroke-linejoin="round" />
<ellipse cx="129.8" cy="427.6" rx="1.3" ry="1.9" transform="rotate(-25.0 129.8 427.6)" fill="none" stroke="#3a3a3a" stroke-width="0.5" />
<ellipse cx="153.2" cy="451.0" rx="1.3" ry="1.9" transform="rotate(-25.0 153.2 451.0)" fill="none" stroke="#3a3a3a" stroke-width="0.5" />
<ellipse cx="167.4" cy="482.7" rx="1.3" ry="1.9" transform="rotate(-25.0 167.4 482.7)" fill="none" stroke="#3a3a3a" stroke-width="0.5" />
<ellipse cx="166.9" cy="511.0" rx="1.3" ry="1.9" transform="rotate(-25.0 166.9 511.0)" fill="none" stroke="#3a3a3a" stroke-width="0.5" />
<ellipse cx="143.5" cy="523.8" rx="1.3" ry="1.9" transform="rotate(-25.0 143.5 523.8)" fill="none" stroke="#3a3a3a" stroke-width="0.5" />
<path d="M99.3 435.8 C99.8 435.1 101.3 432.6 102.5 431.4 C103.7 430.2 105.0 429.3 106.2 428.6 C107.5 427.9 108.7 427.6 110.0 427.3 C111.3 427.1 112.2 426.9 114.0 427.1 C115.8 427.4 118.5 427.9 121.0 428.8 C123.5 429.7 127.4 431.9 128.7 432.5" fill="none" stroke="#3a3a3a" stroke-width="0.5" stroke-linejoin="round" />
<path d="M97.6 438.6 C98.7 437.8 101.8 434.8 104.0 433.6 C106.2 432.4 108.3 431.4 111.0 431.2 C113.7 431.0 116.9 431.7 120.0 432.6 C123.1 433.5 128.0 435.9 129.6 436.6" fill="none" stroke="#3a3a3a" stroke-width="0.6" stroke-linejoin="round" />
<path d="M139.5 444.4 C140.6 445.7 143.9 449.3 146.0 452.0 C148.1 454.7 150.4 457.6 152.3 460.8 C154.2 464.0 156.1 467.5 157.6 471.0 C159.1 474.5 160.9 480.2 161.6 482.0" fill="none" stroke="#3a3a3a" stroke-width="0.6" stroke-linejoin="round" />
<path d="M162.0 493.5 C161.9 494.8 162.1 498.5 161.4 501.0 C160.7 503.5 159.6 506.2 158.0 508.6 C156.4 511.0 154.5 513.5 152.0 515.4 C149.5 517.3 144.5 519.5 143.0 520.3" fill="none" stroke="#3a3a3a" stroke-width="0.6" stroke-linejoin="round" />
<path d="M126.0 447.6 C127.5 449.2 132.2 453.4 135.0 457.0 C137.8 460.6 140.5 464.9 142.6 469.0 C144.7 473.1 146.4 478.3 147.6 481.6 C148.8 484.9 149.3 487.8 149.6 489.0" fill="none" stroke="#666" stroke-width="0.4" stroke-linejoin="round" />
<path d="M147.8 499.6 C147.7 500.8 147.8 504.6 147.4 507.0 C147.0 509.4 146.5 511.7 145.6 514.0 C144.7 516.3 142.6 519.5 142.0 520.6" fill="none" stroke="#666" stroke-width="0.4" stroke-linejoin="round" />
<path d="M134.0 451.0 C135.3 452.6 139.2 456.9 141.6 460.6 C144.0 464.3 146.7 468.8 148.6 473.0 C150.5 477.2 152.3 483.5 153.0 485.6" fill="none" stroke="#666" stroke-width="0.4" stroke-linejoin="round" />
<path d="M103.7 531.5 L103.8 518.6 M107.2 531.2 L107.2 520.2 M110.3 530.8 L118.4 525.9" fill="none" stroke="#3a3a3a" stroke-width="0.5" stroke-linejoin="round" />
<ellipse cx="113.0" cy="482.2" rx="42.0" ry="23.0" transform="rotate(61.0 113.0 482.2)" fill="#fff" stroke="#3a3a3a" stroke-width="0.6" />
<ellipse cx="108.0" cy="485.0" rx="42.0" ry="23.0" transform="rotate(61.0 108.0 485.0)" fill="#fff" stroke="#3a3a3a" stroke-width="0.75" />
<ellipse cx="107.9" cy="485.1" rx="40.0" ry="21.0" transform="rotate(61.0 107.9 485.1)" fill="none" stroke="#3a3a3a" stroke-width="0.5" />
<ellipse cx="109.4" cy="484.4" rx="36.8" ry="18.4" transform="rotate(61.0 109.4 484.4)" fill="none" stroke="#3a3a3a" stroke-width="0.65" />
<path d="M100.5 482.1 L99.0 478.7 L97.9 475.2 L96.9 471.9 L96.2 468.5 L95.7 465.3 L95.5 462.3 L95.6 459.4 L95.9 456.8 L96.5 454.4 L97.3 452.3 L98.3 450.4 L99.6 448.9 L101.2 447.7 L102.9 446.9 L104.7 446.4 L106.8 446.3 L109.0 446.6 L111.3 447.2 L113.6 448.2 L116.1 449.5 L118.6 451.1 L121.0 453.1 L123.5 455.3 L125.9 457.8" fill="none" stroke="#666" stroke-width="0.45"/>
<path d="M108.4 469.8 L107.4 466.5 L106.7 463.2 L106.3 460.1 L106.1 457.1 L106.2 454.3 L106.5 451.7 L107.1 449.4 L107.9 447.3 L109.0 445.5 L110.3 444.0 L111.8 442.9 L113.5 442.1 L115.4 441.7 L117.4 441.6 L119.6 441.9 L121.9 442.6 L124.2 443.6 L126.6 444.9 L129.1 446.6" fill="none" stroke="#666" stroke-width="0.45"/>
<path d="M117.2 456.3 L139.8 445.1 A3.0 5.0 -26 0 0 135.4 436.1 L112.8 447.3 A3.0 5.0 -26 0 0 117.2 456.3Z" fill="#fff" stroke="#3a3a3a" stroke-width="0.7" stroke-linejoin="round" />
<path d="M112.8 447.3 L113.1 447.2 L113.4 447.1 L113.7 447.1 L114.1 447.2 L114.4 447.3 L114.8 447.4 L115.1 447.6 L115.5 447.8 L115.9 448.1 L116.2 448.4 L116.6 448.8 L116.9 449.1 L117.2 449.6 L117.4 450.0 L117.7 450.5 L117.9 450.9 L118.1 451.4 L118.2 451.9 L118.4 452.4 L118.4 452.9 L118.5 453.4 L118.5 453.8 L118.4 454.2 L118.4 454.6 L118.3 455.0 L118.1 455.4 L117.9 455.6 L117.7 455.9 L117.5 456.1 L117.2 456.3" fill="none" stroke="#3a3a3a" stroke-width="0.5"/>
<ellipse cx="114.7" cy="451.9" rx="1.4" ry="2.0" transform="rotate(-26.4 114.7 451.9)" fill="none" stroke="#3a3a3a" stroke-width="0.6" />
<path d="M142.3 503.3 L164.9 491.9 A3.0 5.0 -27 0 0 160.3 482.9 L137.7 494.3 A3.0 5.0 -27 0 0 142.3 503.3Z" fill="#fff" stroke="#3a3a3a" stroke-width="0.7" stroke-linejoin="round" />
<path d="M137.7 494.3 L138.0 494.2 L138.4 494.2 L138.7 494.1 L139.0 494.2 L139.4 494.3 L139.8 494.4 L140.1 494.6 L140.5 494.8 L140.8 495.1 L141.2 495.4 L141.5 495.7 L141.9 496.1 L142.2 496.6 L142.4 497.0 L142.7 497.4 L142.9 497.9 L143.1 498.4 L143.2 498.9 L143.4 499.4 L143.4 499.9 L143.5 500.3 L143.5 500.8 L143.5 501.2 L143.4 501.6 L143.3 502.0 L143.1 502.3 L143.0 502.6 L142.8 502.9 L142.5 503.1 L142.3 503.3" fill="none" stroke="#3a3a3a" stroke-width="0.5"/>
<ellipse cx="139.7" cy="498.9" rx="1.4" ry="2.0" transform="rotate(-26.8 139.7 498.9)" fill="none" stroke="#3a3a3a" stroke-width="0.6" />
<path d="M72.2 471.8 L84.6 465.6 A2.2 3.6 -27 0 0 81.4 459.2 L69.0 465.4 A2.2 3.6 -27 0 0 72.2 471.8Z" fill="#fff" stroke="#3a3a3a" stroke-width="0.7" stroke-linejoin="round" />
<path d="M69.0 465.4 L69.2 465.3 L69.4 465.2 L69.7 465.2 L69.9 465.3 L70.2 465.3 L70.4 465.4 L70.7 465.6 L71.0 465.7 L71.2 465.9 L71.5 466.2 L71.7 466.4 L71.9 466.7 L72.2 467.0 L72.4 467.3 L72.5 467.6 L72.7 468.0 L72.8 468.3 L72.9 468.7 L73.0 469.0 L73.1 469.4 L73.1 469.7 L73.1 470.0 L73.1 470.3 L73.0 470.6 L73.0 470.9 L72.9 471.1 L72.7 471.4 L72.6 471.5 L72.4 471.7 L72.2 471.8" fill="none" stroke="#3a3a3a" stroke-width="0.5"/>
<ellipse cx="70.3" cy="468.7" rx="1.1" ry="1.6" transform="rotate(-26.6 70.3 468.7)" fill="none" stroke="#3a3a3a" stroke-width="0.6" />
<path d="M102.7 518.5 L105.8 517.0 A2.0 3.3 -26 0 0 103.0 511.0 L99.9 512.5 A2.0 3.3 -26 0 0 102.7 518.5Z" fill="#fff" stroke="#3a3a3a" stroke-width="0.7" stroke-linejoin="round" />
<path d="M99.9 512.5 L100.1 512.5 L100.3 512.4 L100.5 512.4 L100.7 512.4 L100.9 512.5 L101.2 512.6 L101.4 512.7 L101.7 512.9 L101.9 513.1 L102.1 513.3 L102.3 513.5 L102.6 513.8 L102.7 514.0 L102.9 514.3 L103.1 514.6 L103.2 515.0 L103.3 515.3 L103.4 515.6 L103.5 515.9 L103.6 516.2 L103.6 516.5 L103.6 516.8 L103.6 517.1 L103.5 517.4 L103.4 517.6 L103.3 517.9 L103.2 518.1 L103.1 518.2 L102.9 518.4 L102.7 518.5" fill="none" stroke="#3a3a3a" stroke-width="0.5"/>
<ellipse cx="101.0" cy="515.6" rx="1.2" ry="1.7" transform="rotate(-25.8 101.0 515.6)" fill="none" stroke="#3a3a3a" stroke-width="0.6" />
<path d="M67.1 507.0 L113.0 480.3" fill="none" stroke="#555" stroke-width="0.6"/>
<path d="M89 536.6 V543 Q92.6 545.6 96.2 543 V536.6" fill="#fff" stroke="#3a3a3a" stroke-width="0.7" stroke-linejoin="round" />
<ellipse cx="92.6" cy="536.6" rx="3.6" ry="1.7" transform="rotate(0.0 92.6 536.6)" fill="#fff" stroke="#3a3a3a" stroke-width="0.7" />
<path d="M295.0 285.3 L300.6 293.0" fill="none" stroke="#444" stroke-width="0.6"/>
<path d="M259.0 297.8 L263.0 305.8" fill="none" stroke="#444" stroke-width="0.6"/>
<path d="M220.0 324.5 L226.5 329.5" fill="none" stroke="#444" stroke-width="0.6"/>
<path d="M202.5 331.0 L206.5 338.0" fill="none" stroke="#444" stroke-width="0.6"/>
<path d="M186.0 366.0 L190.0 372.0" fill="none" stroke="#444" stroke-width="0.6"/>
<path d="M53.0 409.5 L53.6 412.5" fill="none" stroke="#444" stroke-width="0.6"/>
<path d="M157.6 527.0 L162.4 538.0" fill="none" stroke="#444" stroke-width="0.6"/>
<path d="M93.0 545.5 L93.6 550.0" fill="none" stroke="#444" stroke-width="0.6"/>
<path d="M203.5 455.0 L211.0 468.0" fill="none" stroke="#444" stroke-width="0.6"/>
<path d="M228.8 436.8 L233.0 446.6" fill="none" stroke="#444" stroke-width="0.6"/>
<path d="M267.3 430.6 L276.3 440.5" fill="none" stroke="#444" stroke-width="0.6"/>
<path d="M278.5 385.0 L282.0 391.5" fill="none" stroke="#444" stroke-width="0.6"/>
<path d="M293.0 375.1 L298.8 382.0" fill="none" stroke="#444" stroke-width="0.6"/>
<rect x="299.0" y="293.0" width="9.2" height="7.0" fill="#fa7a7a"/>
<text x="303.6" y="299.0" text-anchor="middle" font-size="6.2" fill="#5a4a4a">10</text>
<rect x="261.2" y="306.0" width="6.0" height="7.0" fill="#ffff00"/>
<text x="264.2" y="312.0" text-anchor="middle" font-size="6.2" fill="#222">9</text>
<rect x="224.2" y="329.0" width="6.0" height="7.0" fill="#ffff00"/>
<text x="227.2" y="335.0" text-anchor="middle" font-size="6.2" fill="#222">8</text>
<rect x="204.0" y="338.0" width="6.0" height="7.0" fill="#ffff00"/>
<text x="207.0" y="344.0" text-anchor="middle" font-size="6.2" fill="#222">7</text>
<rect x="187.8" y="371.6" width="6.4" height="7.0" fill="#ffff00"/>
<text x="191.0" y="377.6" text-anchor="middle" font-size="6.2" fill="#222">6</text>
<rect x="51.0" y="412.2" width="5.0" height="6.8" fill="#ffff00"/>
<text x="53.5" y="418.0" text-anchor="middle" font-size="6.2" fill="#222">4</text>
<rect x="160.0" y="538.0" width="6.0" height="7.4" fill="#ffff00"/>
<text x="163.0" y="544.4" text-anchor="middle" font-size="6.2" fill="#222">3</text>
<rect x="90.0" y="550.0" width="8.4" height="6.6" fill="#ffff00"/>
<text x="94.2" y="555.6" text-anchor="middle" font-size="6.2" fill="#222">11</text>
<rect x="207.0" y="467.8" width="9.2" height="7.0" fill="#ffff00"/>
<text x="211.6" y="473.8" text-anchor="middle" font-size="6.2" fill="#222">12</text>
<rect x="231.0" y="446.7" width="9.0" height="7.7" fill="#ffff00"/>
<text x="235.5" y="453.4" text-anchor="middle" font-size="6.2" fill="#222">13</text>
<rect x="274.4" y="440.6" width="8.6" height="7.8" fill="#ffff00"/>
<text x="278.7" y="447.4" text-anchor="middle" font-size="6.2" fill="#222">14</text>
<rect x="279.0" y="391.6" width="8.2" height="7.6" fill="#ffff00"/>
<text x="283.1" y="398.2" text-anchor="middle" font-size="6.2" fill="#222">15</text>
<rect x="297.8" y="381.9" width="8.6" height="7.4" fill="#ffff00"/>
<text x="302.1" y="388.3" text-anchor="middle" font-size="6.2" fill="#222">16</text>
</svg>
</div>
<div id="right">
<div id="grid">
<div class="hrow">
<div class="hc" style="left:0px;width:61px"><svg class="ic-find" width="17" height="17" viewBox="0 0 17 17"><rect x="0.5" y="0.5" width="13" height="13" fill="#1467b3"/><rect x="1.2" y="1.2" width="11.6" height="1.1" fill="#fff"/><rect x="1.2" y="3.4" width="2.6" height="9.4" fill="#fff"/><rect x="11.6" y="3.4" width="1.2" height="1.2" fill="#fff"/><path d="M2.4 4.4h1M2.4 6.4h1M2.4 8.4h1M2.4 10.4h1" stroke="#1467b3" stroke-width="0.9"/><path d="M11.5 11.6 L15.6 15.4" stroke="#2d72c2" stroke-width="2" stroke-linecap="round"/><circle cx="8.6" cy="8.5" r="4.5" fill="#d9dbde" stroke="#1d63ad" stroke-width="1"/><path d="M6 7 Q8.6 4.6 11 7.2" stroke="#f6f6f6" stroke-width="1.3" fill="none"/></svg></div>
<div class="hc" style="left:62px;width:83px"><span style="letter-spacing:-0.49px">Symbol(s)</span></div>
<div class="hc" style="left:146px;width:34px"><span style="letter-spacing:0.17px">Item</span></div>
<div class="hc" style="left:181px;width:83px"><span style="letter-spacing:-0.11px">Parts No.</span></div>
<div class="hc" style="left:265px;width:34px"><span style="letter-spacing:0.3px">Qty.</span></div>
<div class="hc" style="left:300px;width:83px"><span style="letter-spacing:-0.15px">Latest Part No.</span></div>
<div class="hc" style="left:384px;width:174px"><span style="letter-spacing:0.15px">Description</span></div>
<div class="hc" style="left:559px;width:69px"><span style="letter-spacing:0px">Cut Out</span></div>
<div class="hc" style="left:629px;width:17px"><span style="letter-spacing:0px">Cu</span></div>
</div>
<div class="row" style="top:20px">
<div class="c c0" style="left:0px;width:61px"><svg class="ic-gear" width="10.4" height="10.4" viewBox="0 0 11 11"><circle cx="5.5" cy="5.5" r="2.75" fill="none" stroke="#7fb32a" stroke-width="2.9"/><circle cx="5.5" cy="5.5" r="4.5" fill="none" stroke="#7fb32a" stroke-width="1.9" stroke-dasharray="2 1.534" stroke-dashoffset="1"/></svg><svg class="ic-info nocart" width="14.2" height="14.2" viewBox="0 0 15 15"><circle cx="7.5" cy="7.5" r="6.9" fill="url(#g-info)" stroke="#a9c9e6" stroke-width="0.8"/><rect x="6.6" y="3.4" width="1.9" height="1.9" fill="#2f5f9f"/><rect x="6.6" y="6.4" width="1.9" height="5" fill="#2f5f9f"/></svg></div>
<div class="c c1" style="left:62px;width:83px"><span></span></div>
<div class="c c2" style="left:146px;width:34px"><span>3</span></div>
<div class="c c3" style="left:181px;width:83px"><span></span></div>
<div class="c c4" style="left:265px;width:34px"><span>1</span></div>
<div class="c c5" style="left:300px;width:83px"><span></span></div>
<div class="c c6" style="left:384px;width:174px"><span>WATER PUMP HOUSING</span></div>
<div class="c c7" style="left:559px;width:69px"><span></span></div>
<div class="c c8" style="left:629px;width:17px"><span></span></div>
</div>
<div class="row" style="top:40px">
<div class="c c0" style="left:0px;width:61px"><svg class="ic-gear" width="10.4" height="10.4" viewBox="0 0 11 11"><circle cx="5.5" cy="5.5" r="2.75" fill="none" stroke="#7fb32a" stroke-width="2.9"/><circle cx="5.5" cy="5.5" r="4.5" fill="none" stroke="#7fb32a" stroke-width="1.9" stroke-dasharray="2 1.534" stroke-dashoffset="1"/></svg><svg class="ic-cart" width="17" height="14" viewBox="0 0 17 14"><path d="M0.3 0.8 L2.2 1.4 L3 3 L4.6 9.6 L13.8 9.6" fill="none" stroke="#3b669f" stroke-width="1.1"/><path d="M2.9 2.9 H15.7 L13.2 7.2 H4" fill="#eef3f9" stroke="#3b669f" stroke-width="1"/><path d="M5 3.4V6.8M6.7 3.4V6.8M8.4 3.4V6.8M10.1 3.4V6.8M11.8 3.4V6.8M13.5 3.4V6.2" stroke="#3b669f" stroke-width="0.9" fill="none"/><path d="M3.6 5 H14.4" stroke="#7d9cc4" stroke-width="0.6"/><circle cx="4.9" cy="11.9" r="1.1" fill="#4a90d9"/><circle cx="12.9" cy="11.9" r="1.1" fill="#4a90d9"/></svg><svg class="ic-info" width="14.2" height="14.2" viewBox="0 0 15 15"><circle cx="7.5" cy="7.5" r="6.9" fill="url(#g-info)" stroke="#a9c9e6" stroke-width="0.8"/><rect x="6.6" y="3.4" width="1.9" height="1.9" fill="#2f5f9f"/><rect x="6.6" y="6.4" width="1.9" height="5" fill="#2f5f9f"/></svg></div>
<div class="c c1" style="left:62px;width:83px"><span></span></div>
<div class="c c2" style="left:146px;width:34px"><span>4</span></div>
<div class="c c3" style="left:181px;width:83px"><span>CH10550</span></div>
<div class="c c4" style="left:265px;width:34px"><span>1</span></div>
<div class="c c5" style="left:300px;width:83px"><span>CH10550</span></div>
<div class="c c6" style="left:384px;width:174px"><span>BOLT</span></div>
<div class="c c7" style="left:559px;width:69px"><span></span></div>
<div class="c c8" style="left:629px;width:17px"><span></span></div>
</div>
<div class="row hov" style="top:60px">
<div class="c c0" style="left:0px;width:61px"><svg class="ic-gear" width="10.4" height="10.4" viewBox="0 0 11 11"><circle cx="5.5" cy="5.5" r="2.75" fill="none" stroke="#7fb32a" stroke-width="2.9"/><circle cx="5.5" cy="5.5" r="4.5" fill="none" stroke="#7fb32a" stroke-width="1.9" stroke-dasharray="2 1.534" stroke-dashoffset="1"/></svg><svg class="ic-cart" width="17" height="14" viewBox="0 0 17 14"><path d="M0.3 0.8 L2.2 1.4 L3 3 L4.6 9.6 L13.8 9.6" fill="none" stroke="#3b669f" stroke-width="1.1"/><path d="M2.9 2.9 H15.7 L13.2 7.2 H4" fill="#eef3f9" stroke="#3b669f" stroke-width="1"/><path d="M5 3.4V6.8M6.7 3.4V6.8M8.4 3.4V6.8M10.1 3.4V6.8M11.8 3.4V6.8M13.5 3.4V6.2" stroke="#3b669f" stroke-width="0.9" fill="none"/><path d="M3.6 5 H14.4" stroke="#7d9cc4" stroke-width="0.6"/><circle cx="4.9" cy="11.9" r="1.1" fill="#4a90d9"/><circle cx="12.9" cy="11.9" r="1.1" fill="#4a90d9"/></svg><svg class="ic-info" width="14.2" height="14.2" viewBox="0 0 15 15"><circle cx="7.5" cy="7.5" r="6.9" fill="url(#g-info)" stroke="#a9c9e6" stroke-width="0.8"/><rect x="6.6" y="3.4" width="1.9" height="1.9" fill="#2f5f9f"/><rect x="6.6" y="6.4" width="1.9" height="5" fill="#2f5f9f"/></svg></div>
<div class="c c1" style="left:62px;width:83px"><span></span></div>
<div class="c c2" style="left:146px;width:34px"><span>5</span></div>
<div class="c c3" style="left:181px;width:83px"><span>CH10549</span></div>
<div class="c c4" style="left:265px;width:34px"><span>1</span></div>
<div class="c c5" style="left:300px;width:83px"><span>CH10549</span></div>
<div class="c c6" style="left:384px;width:174px"><span>WASHER</span></div>
<div class="c c7" style="left:559px;width:69px"><span></span></div>
<div class="c c8" style="left:629px;width:17px"><span></span></div>
</div>
<div class="row" style="top:80px">
<div class="c c0" style="left:0px;width:61px"><svg class="ic-gear" width="10.4" height="10.4" viewBox="0 0 11 11"><circle cx="5.5" cy="5.5" r="2.75" fill="none" stroke="#7fb32a" stroke-width="2.9"/><circle cx="5.5" cy="5.5" r="4.5" fill="none" stroke="#7fb32a" stroke-width="1.9" stroke-dasharray="2 1.534" stroke-dashoffset="1"/></svg><svg class="ic-cart" width="17" height="14" viewBox="0 0 17 14"><path d="M0.3 0.8 L2.2 1.4 L3 3 L4.6 9.6 L13.8 9.6" fill="none" stroke="#3b669f" stroke-width="1.1"/><path d="M2.9 2.9 H15.7 L13.2 7.2 H4" fill="#eef3f9" stroke="#3b669f" stroke-width="1"/><path d="M5 3.4V6.8M6.7 3.4V6.8M8.4 3.4V6.8M10.1 3.4V6.8M11.8 3.4V6.8M13.5 3.4V6.2" stroke="#3b669f" stroke-width="0.9" fill="none"/><path d="M3.6 5 H14.4" stroke="#7d9cc4" stroke-width="0.6"/><circle cx="4.9" cy="11.9" r="1.1" fill="#4a90d9"/><circle cx="12.9" cy="11.9" r="1.1" fill="#4a90d9"/></svg><svg class="ic-info" width="14.2" height="14.2" viewBox="0 0 15 15"><circle cx="7.5" cy="7.5" r="6.9" fill="url(#g-info)" stroke="#a9c9e6" stroke-width="0.8"/><rect x="6.6" y="3.4" width="1.9" height="1.9" fill="#2f5f9f"/><rect x="6.6" y="6.4" width="1.9" height="5" fill="#2f5f9f"/></svg></div>
<div class="c c1" style="left:62px;width:83px"><span></span></div>
<div class="c c2" style="left:146px;width:34px"><span>6</span></div>
<div class="c c3" style="left:181px;width:83px"><span>CH10548</span></div>
<div class="c c4" style="left:265px;width:34px"><span>1</span></div>
<div class="c c5" style="left:300px;width:83px"><span>CH10548</span></div>
<div class="c c6" style="left:384px;width:174px"><span>IMPELLER</span></div>
<div class="c c7" style="left:559px;width:69px"><span></span></div>
<div class="c c8" style="left:629px;width:17px"><span></span></div>
</div>
<div class="row" style="top:100px">
<div class="c c0" style="left:0px;width:61px"><svg class="ic-gear" width="10.4" height="10.4" viewBox="0 0 11 11"><circle cx="5.5" cy="5.5" r="2.75" fill="none" stroke="#7fb32a" stroke-width="2.9"/><circle cx="5.5" cy="5.5" r="4.5" fill="none" stroke="#7fb32a" stroke-width="1.9" stroke-dasharray="2 1.534" stroke-dashoffset="1"/></svg><svg class="ic-cart" width="17" height="14" viewBox="0 0 17 14"><path d="M0.3 0.8 L2.2 1.4 L3 3 L4.6 9.6 L13.8 9.6" fill="none" stroke="#3b669f" stroke-width="1.1"/><path d="M2.9 2.9 H15.7 L13.2 7.2 H4" fill="#eef3f9" stroke="#3b669f" stroke-width="1"/><path d="M5 3.4V6.8M6.7 3.4V6.8M8.4 3.4V6.8M10.1 3.4V6.8M11.8 3.4V6.8M13.5 3.4V6.2" stroke="#3b669f" stroke-width="0.9" fill="none"/><path d="M3.6 5 H14.4" stroke="#7d9cc4" stroke-width="0.6"/><circle cx="4.9" cy="11.9" r="1.1" fill="#4a90d9"/><circle cx="12.9" cy="11.9" r="1.1" fill="#4a90d9"/></svg><svg class="ic-info" width="14.2" height="14.2" viewBox="0 0 15 15"><circle cx="7.5" cy="7.5" r="6.9" fill="url(#g-info)" stroke="#a9c9e6" stroke-width="0.8"/><rect x="6.6" y="3.4" width="1.9" height="1.9" fill="#2f5f9f"/><rect x="6.6" y="6.4" width="1.9" height="5" fill="#2f5f9f"/></svg></div>
<div class="c c1" style="left:62px;width:83px"><span></span></div>
<div class="c c2" style="left:146px;width:34px"><span>7</span></div>
<div class="c c3" style="left:181px;width:83px"><span>CH12889</span></div>
<div class="c c4" style="left:265px;width:34px"><span>1</span></div>
<div class="c c5" style="left:300px;width:83px"><span>CH12889</span></div>
<div class="c c6" style="left:384px;width:174px"><span>SEAL - WATER PUMP</span></div>
<div class="c c7" style="left:559px;width:69px"><span></span></div>
<div class="c c8" style="left:629px;width:17px"><span></span></div>
</div>
<div class="row" style="top:120px">
<div class="c c0" style="left:0px;width:61px"><svg class="ic-gear" width="10.4" height="10.4" viewBox="0 0 11 11"><circle cx="5.5" cy="5.5" r="2.75" fill="none" stroke="#7fb32a" stroke-width="2.9"/><circle cx="5.5" cy="5.5" r="4.5" fill="none" stroke="#7fb32a" stroke-width="1.9" stroke-dasharray="2 1.534" stroke-dashoffset="1"/></svg><svg class="ic-cart" width="17" height="14" viewBox="0 0 17 14"><path d="M0.3 0.8 L2.2 1.4 L3 3 L4.6 9.6 L13.8 9.6" fill="none" stroke="#3b669f" stroke-width="1.1"/><path d="M2.9 2.9 H15.7 L13.2 7.2 H4" fill="#eef3f9" stroke="#3b669f" stroke-width="1"/><path d="M5 3.4V6.8M6.7 3.4V6.8M8.4 3.4V6.8M10.1 3.4V6.8M11.8 3.4V6.8M13.5 3.4V6.2" stroke="#3b669f" stroke-width="0.9" fill="none"/><path d="M3.6 5 H14.4" stroke="#7d9cc4" stroke-width="0.6"/><circle cx="4.9" cy="11.9" r="1.1" fill="#4a90d9"/><circle cx="12.9" cy="11.9" r="1.1" fill="#4a90d9"/></svg><svg class="ic-info" width="14.2" height="14.2" viewBox="0 0 15 15"><circle cx="7.5" cy="7.5" r="6.9" fill="url(#g-info)" stroke="#a9c9e6" stroke-width="0.8"/><rect x="6.6" y="3.4" width="1.9" height="1.9" fill="#2f5f9f"/><rect x="6.6" y="6.4" width="1.9" height="5" fill="#2f5f9f"/></svg></div>
<div class="c c1" style="left:62px;width:83px"><span></span></div>
<div class="c c2" style="left:146px;width:34px"><span>8</span></div>
<div class="c c3" style="left:181px;width:83px"><span>CH10554</span></div>
<div class="c c4" style="left:265px;width:34px"><span>1</span></div>
<div class="c c5" style="left:300px;width:83px"><span>CH10554</span></div>
<div class="c c6" style="left:384px;width:174px"><span>SEAL - WATER PUMP</span></div>
<div class="c c7" style="left:559px;width:69px"><span></span></div>
<div class="c c8" style="left:629px;width:17px"><span></span></div>
</div>
<div class="row" style="top:140px">
<div class="c c0" style="left:0px;width:61px"><svg class="ic-gear" width="10.4" height="10.4" viewBox="0 0 11 11"><circle cx="5.5" cy="5.5" r="2.75" fill="none" stroke="#7fb32a" stroke-width="2.9"/><circle cx="5.5" cy="5.5" r="4.5" fill="none" stroke="#7fb32a" stroke-width="1.9" stroke-dasharray="2 1.534" stroke-dashoffset="1"/></svg><svg class="ic-cart" width="17" height="14" viewBox="0 0 17 14"><path d="M0.3 0.8 L2.2 1.4 L3 3 L4.6 9.6 L13.8 9.6" fill="none" stroke="#3b669f" stroke-width="1.1"/><path d="M2.9 2.9 H15.7 L13.2 7.2 H4" fill="#eef3f9" stroke="#3b669f" stroke-width="1"/><path d="M5 3.4V6.8M6.7 3.4V6.8M8.4 3.4V6.8M10.1 3.4V6.8M11.8 3.4V6.8M13.5 3.4V6.2" stroke="#3b669f" stroke-width="0.9" fill="none"/><path d="M3.6 5 H14.4" stroke="#7d9cc4" stroke-width="0.6"/><circle cx="4.9" cy="11.9" r="1.1" fill="#4a90d9"/><circle cx="12.9" cy="11.9" r="1.1" fill="#4a90d9"/></svg><svg class="ic-info" width="14.2" height="14.2" viewBox="0 0 15 15"><circle cx="7.5" cy="7.5" r="6.9" fill="url(#g-info)" stroke="#a9c9e6" stroke-width="0.8"/><rect x="6.6" y="3.4" width="1.9" height="1.9" fill="#2f5f9f"/><rect x="6.6" y="6.4" width="1.9" height="5" fill="#2f5f9f"/></svg></div>
<div class="c c1" style="left:62px;width:83px"><span></span></div>
<div class="c c2" style="left:146px;width:34px"><span>9</span></div>
<div class="c c3" style="left:181px;width:83px"><span>CH10555</span></div>
<div class="c c4" style="left:265px;width:34px"><span>1</span></div>
<div class="c c5" style="left:300px;width:83px"><span>CH10555</span></div>
<div class="c c6" style="left:384px;width:174px"><span>SHAFT</span></div>
<div class="c c7" style="left:559px;width:69px"><span></span></div>
<div class="c c8" style="left:629px;width:17px"><span></span></div>
</div>
<div class="row sel" style="top:160px">
<div class="c c0" style="left:0px;width:61px"><svg class="ic-gear" width="10.4" height="10.4" viewBox="0 0 11 11"><circle cx="5.5" cy="5.5" r="2.75" fill="none" stroke="#7fb32a" stroke-width="2.9"/><circle cx="5.5" cy="5.5" r="4.5" fill="none" stroke="#7fb32a" stroke-width="1.9" stroke-dasharray="2 1.534" stroke-dashoffset="1"/></svg><svg class="ic-cart" width="17" height="14" viewBox="0 0 17 14"><path d="M0.3 0.8 L2.2 1.4 L3 3 L4.6 9.6 L13.8 9.6" fill="none" stroke="#3b669f" stroke-width="1.1"/><path d="M2.9 2.9 H15.7 L13.2 7.2 H4" fill="#eef3f9" stroke="#3b669f" stroke-width="1"/><path d="M5 3.4V6.8M6.7 3.4V6.8M8.4 3.4V6.8M10.1 3.4V6.8M11.8 3.4V6.8M13.5 3.4V6.2" stroke="#3b669f" stroke-width="0.9" fill="none"/><path d="M3.6 5 H14.4" stroke="#7d9cc4" stroke-width="0.6"/><circle cx="4.9" cy="11.9" r="1.1" fill="#4a90d9"/><circle cx="12.9" cy="11.9" r="1.1" fill="#4a90d9"/></svg><svg class="ic-info" width="14.2" height="14.2" viewBox="0 0 15 15"><circle cx="7.5" cy="7.5" r="6.9" fill="url(#g-info)" stroke="#a9c9e6" stroke-width="0.8"/><rect x="6.6" y="3.4" width="1.9" height="1.9" fill="#2f5f9f"/><rect x="6.6" y="6.4" width="1.9" height="5" fill="#2f5f9f"/></svg></div>
<div class="c c1" style="left:62px;width:83px"><span></span></div>
<div class="c c2" style="left:146px;width:34px"><span>10</span></div>
<div class="c c3" style="left:181px;width:83px"><span>CH10558</span></div>
<div class="c c4" style="left:265px;width:34px"><span>1</span></div>
<div class="c c5" style="left:300px;width:83px"><span>CH10558</span></div>
<div class="c c6" style="left:384px;width:174px"><span>ROLLER BEARING</span></div>
<div class="c c7" style="left:559px;width:69px"><span></span></div>
<div class="c c8" style="left:629px;width:17px"><span></span></div>
</div>
<div class="row" style="top:180px">
<div class="c c0" style="left:0px;width:61px"><svg class="ic-gear" width="10.4" height="10.4" viewBox="0 0 11 11"><circle cx="5.5" cy="5.5" r="2.75" fill="none" stroke="#7fb32a" stroke-width="2.9"/><circle cx="5.5" cy="5.5" r="4.5" fill="none" stroke="#7fb32a" stroke-width="1.9" stroke-dasharray="2 1.534" stroke-dashoffset="1"/></svg><svg class="ic-cart" width="17" height="14" viewBox="0 0 17 14"><path d="M0.3 0.8 L2.2 1.4 L3 3 L4.6 9.6 L13.8 9.6" fill="none" stroke="#3b669f" stroke-width="1.1"/><path d="M2.9 2.9 H15.7 L13.2 7.2 H4" fill="#eef3f9" stroke="#3b669f" stroke-width="1"/><path d="M5 3.4V6.8M6.7 3.4V6.8M8.4 3.4V6.8M10.1 3.4V6.8M11.8 3.4V6.8M13.5 3.4V6.2" stroke="#3b669f" stroke-width="0.9" fill="none"/><path d="M3.6 5 H14.4" stroke="#7d9cc4" stroke-width="0.6"/><circle cx="4.9" cy="11.9" r="1.1" fill="#4a90d9"/><circle cx="12.9" cy="11.9" r="1.1" fill="#4a90d9"/></svg><svg class="ic-info" width="14.2" height="14.2" viewBox="0 0 15 15"><circle cx="7.5" cy="7.5" r="6.9" fill="url(#g-info)" stroke="#a9c9e6" stroke-width="0.8"/><rect x="6.6" y="3.4" width="1.9" height="1.9" fill="#2f5f9f"/><rect x="6.6" y="6.4" width="1.9" height="5" fill="#2f5f9f"/></svg></div>
<div class="c c1" style="left:62px;width:83px"><span></span></div>
<div class="c c2" style="left:146px;width:34px"><span>11</span></div>
<div class="c c3" style="left:181px;width:83px"><span>CH10560</span></div>
<div class="c c4" style="left:265px;width:34px"><span>1</span></div>
<div class="c c5" style="left:300px;width:83px"><span>CH10560</span></div>
<div class="c c6" style="left:384px;width:174px"><span>STRAINER</span></div>
<div class="c c7" style="left:559px;width:69px"><span></span></div>
<div class="c c8" style="left:629px;width:17px"><span></span></div>
</div>
<div class="row" style="top:200px">
<div class="c c0" style="left:0px;width:61px"><svg class="ic-gear" width="10.4" height="10.4" viewBox="0 0 11 11"><circle cx="5.5" cy="5.5" r="2.75" fill="none" stroke="#7fb32a" stroke-width="2.9"/><circle cx="5.5" cy="5.5" r="4.5" fill="none" stroke="#7fb32a" stroke-width="1.9" stroke-dasharray="2 1.534" stroke-dashoffset="1"/></svg><svg class="ic-cart" width="17" height="14" viewBox="0 0 17 14"><path d="M0.3 0.8 L2.2 1.4 L3 3 L4.6 9.6 L13.8 9.6" fill="none" stroke="#3b669f" stroke-width="1.1"/><path d="M2.9 2.9 H15.7 L13.2 7.2 H4" fill="#eef3f9" stroke="#3b669f" stroke-width="1"/><path d="M5 3.4V6.8M6.7 3.4V6.8M8.4 3.4V6.8M10.1 3.4V6.8M11.8 3.4V6.8M13.5 3.4V6.2" stroke="#3b669f" stroke-width="0.9" fill="none"/><path d="M3.6 5 H14.4" stroke="#7d9cc4" stroke-width="0.6"/><circle cx="4.9" cy="11.9" r="1.1" fill="#4a90d9"/><circle cx="12.9" cy="11.9" r="1.1" fill="#4a90d9"/></svg><svg class="ic-info" width="14.2" height="14.2" viewBox="0 0 15 15"><circle cx="7.5" cy="7.5" r="6.9" fill="url(#g-info)" stroke="#a9c9e6" stroke-width="0.8"/><rect x="6.6" y="3.4" width="1.9" height="1.9" fill="#2f5f9f"/><rect x="6.6" y="6.4" width="1.9" height="5" fill="#2f5f9f"/></svg></div>
<div class="c c1" style="left:62px;width:83px"><span></span></div>
<div class="c c2" style="left:146px;width:34px"><span>12</span></div>
<div class="c c3" style="left:181px;width:83px"><span>CH10559</span></div>
<div class="c c4" style="left:265px;width:34px"><span>1</span></div>
<div class="c c5" style="left:300px;width:83px"><span>CH10559</span></div>
<div class="c c6" style="left:384px;width:174px"><span>PLATE</span></div>
<div class="c c7" style="left:559px;width:69px"><span></span></div>
<div class="c c8" style="left:629px;width:17px"><span></span></div>
</div>
<div class="row" style="top:220px">
<div class="c c0" style="left:0px;width:61px"><svg class="ic-gear" width="10.4" height="10.4" viewBox="0 0 11 11"><circle cx="5.5" cy="5.5" r="2.75" fill="none" stroke="#7fb32a" stroke-width="2.9"/><circle cx="5.5" cy="5.5" r="4.5" fill="none" stroke="#7fb32a" stroke-width="1.9" stroke-dasharray="2 1.534" stroke-dashoffset="1"/></svg><svg class="ic-cart" width="17" height="14" viewBox="0 0 17 14"><path d="M0.3 0.8 L2.2 1.4 L3 3 L4.6 9.6 L13.8 9.6" fill="none" stroke="#3b669f" stroke-width="1.1"/><path d="M2.9 2.9 H15.7 L13.2 7.2 H4" fill="#eef3f9" stroke="#3b669f" stroke-width="1"/><path d="M5 3.4V6.8M6.7 3.4V6.8M8.4 3.4V6.8M10.1 3.4V6.8M11.8 3.4V6.8M13.5 3.4V6.2" stroke="#3b669f" stroke-width="0.9" fill="none"/><path d="M3.6 5 H14.4" stroke="#7d9cc4" stroke-width="0.6"/><circle cx="4.9" cy="11.9" r="1.1" fill="#4a90d9"/><circle cx="12.9" cy="11.9" r="1.1" fill="#4a90d9"/></svg><svg class="ic-info" width="14.2" height="14.2" viewBox="0 0 15 15"><circle cx="7.5" cy="7.5" r="6.9" fill="url(#g-info)" stroke="#a9c9e6" stroke-width="0.8"/><rect x="6.6" y="3.4" width="1.9" height="1.9" fill="#2f5f9f"/><rect x="6.6" y="6.4" width="1.9" height="5" fill="#2f5f9f"/></svg></div>
<div class="c c1" style="left:62px;width:83px"><span></span></div>
<div class="c c2" style="left:146px;width:34px"><span>13</span></div>
<div class="c c3" style="left:181px;width:83px"><span>CH10557</span></div>
<div class="c c4" style="left:265px;width:34px"><span>4</span></div>
<div class="c c5" style="left:300px;width:83px"><span>CH10557</span></div>
<div class="c c6" style="left:384px;width:174px"><span>BOLT</span></div>
<div class="c c7" style="left:559px;width:69px"><span></span></div>
<div class="c c8" style="left:629px;width:17px"><span></span></div>
</div>
<div class="row" style="top:240px">
<div class="c c0" style="left:0px;width:61px"><svg class="ic-gear" width="10.4" height="10.4" viewBox="0 0 11 11"><circle cx="5.5" cy="5.5" r="2.75" fill="none" stroke="#7fb32a" stroke-width="2.9"/><circle cx="5.5" cy="5.5" r="4.5" fill="none" stroke="#7fb32a" stroke-width="1.9" stroke-dasharray="2 1.534" stroke-dashoffset="1"/></svg><svg class="ic-cart" width="17" height="14" viewBox="0 0 17 14"><path d="M0.3 0.8 L2.2 1.4 L3 3 L4.6 9.6 L13.8 9.6" fill="none" stroke="#3b669f" stroke-width="1.1"/><path d="M2.9 2.9 H15.7 L13.2 7.2 H4" fill="#eef3f9" stroke="#3b669f" stroke-width="1"/><path d="M5 3.4V6.8M6.7 3.4V6.8M8.4 3.4V6.8M10.1 3.4V6.8M11.8 3.4V6.8M13.5 3.4V6.2" stroke="#3b669f" stroke-width="0.9" fill="none"/><path d="M3.6 5 H14.4" stroke="#7d9cc4" stroke-width="0.6"/><circle cx="4.9" cy="11.9" r="1.1" fill="#4a90d9"/><circle cx="12.9" cy="11.9" r="1.1" fill="#4a90d9"/></svg><svg class="ic-info" width="14.2" height="14.2" viewBox="0 0 15 15"><circle cx="7.5" cy="7.5" r="6.9" fill="url(#g-info)" stroke="#a9c9e6" stroke-width="0.8"/><rect x="6.6" y="3.4" width="1.9" height="1.9" fill="#2f5f9f"/><rect x="6.6" y="6.4" width="1.9" height="5" fill="#2f5f9f"/></svg></div>
<div class="c c1" style="left:62px;width:83px"><span></span></div>
<div class="c c2" style="left:146px;width:34px"><span>14</span></div>
<div class="c c3" style="left:181px;width:83px"><span>CH10553</span></div>
<div class="c c4" style="left:265px;width:34px"><span>1</span></div>
<div class="c c5" style="left:300px;width:83px"><span>CH10553</span></div>
<div class="c c6" style="left:384px;width:174px"><span>WATER PUMP GEAR</span></div>
<div class="c c7" style="left:559px;width:69px"><span></span></div>
<div class="c c8" style="left:629px;width:17px"><span></span></div>
</div>
<div class="row" style="top:260px">
<div class="c c0" style="left:0px;width:61px"><svg class="ic-gear" width="10.4" height="10.4" viewBox="0 0 11 11"><circle cx="5.5" cy="5.5" r="2.75" fill="none" stroke="#7fb32a" stroke-width="2.9"/><circle cx="5.5" cy="5.5" r="4.5" fill="none" stroke="#7fb32a" stroke-width="1.9" stroke-dasharray="2 1.534" stroke-dashoffset="1"/></svg><svg class="ic-cart" width="17" height="14" viewBox="0 0 17 14"><path d="M0.3 0.8 L2.2 1.4 L3 3 L4.6 9.6 L13.8 9.6" fill="none" stroke="#3b669f" stroke-width="1.1"/><path d="M2.9 2.9 H15.7 L13.2 7.2 H4" fill="#eef3f9" stroke="#3b669f" stroke-width="1"/><path d="M5 3.4V6.8M6.7 3.4V6.8M8.4 3.4V6.8M10.1 3.4V6.8M11.8 3.4V6.8M13.5 3.4V6.2" stroke="#3b669f" stroke-width="0.9" fill="none"/><path d="M3.6 5 H14.4" stroke="#7d9cc4" stroke-width="0.6"/><circle cx="4.9" cy="11.9" r="1.1" fill="#4a90d9"/><circle cx="12.9" cy="11.9" r="1.1" fill="#4a90d9"/></svg><svg class="ic-info" width="14.2" height="14.2" viewBox="0 0 15 15"><circle cx="7.5" cy="7.5" r="6.9" fill="url(#g-info)" stroke="#a9c9e6" stroke-width="0.8"/><rect x="6.6" y="3.4" width="1.9" height="1.9" fill="#2f5f9f"/><rect x="6.6" y="6.4" width="1.9" height="5" fill="#2f5f9f"/></svg></div>
<div class="c c1" style="left:62px;width:83px"><span></span></div>
<div class="c c2" style="left:146px;width:34px"><span>15</span></div>
<div class="c c3" style="left:181px;width:83px"><span>CH10556</span></div>
<div class="c c4" style="left:265px;width:34px"><span>1</span></div>
<div class="c c5" style="left:300px;width:83px"><span>CH10556</span></div>
<div class="c c6" style="left:384px;width:174px"><span>WASHER</span></div>
<div class="c c7" style="left:559px;width:69px"><span></span></div>
<div class="c c8" style="left:629px;width:17px"><span></span></div>
</div>
<div class="row" style="top:280px">
<div class="c c0" style="left:0px;width:61px"><svg class="ic-gear" width="10.4" height="10.4" viewBox="0 0 11 11"><circle cx="5.5" cy="5.5" r="2.75" fill="none" stroke="#7fb32a" stroke-width="2.9"/><circle cx="5.5" cy="5.5" r="4.5" fill="none" stroke="#7fb32a" stroke-width="1.9" stroke-dasharray="2 1.534" stroke-dashoffset="1"/></svg><svg class="ic-cart" width="17" height="14" viewBox="0 0 17 14"><path d="M0.3 0.8 L2.2 1.4 L3 3 L4.6 9.6 L13.8 9.6" fill="none" stroke="#3b669f" stroke-width="1.1"/><path d="M2.9 2.9 H15.7 L13.2 7.2 H4" fill="#eef3f9" stroke="#3b669f" stroke-width="1"/><path d="M5 3.4V6.8M6.7 3.4V6.8M8.4 3.4V6.8M10.1 3.4V6.8M11.8 3.4V6.8M13.5 3.4V6.2" stroke="#3b669f" stroke-width="0.9" fill="none"/><path d="M3.6 5 H14.4" stroke="#7d9cc4" stroke-width="0.6"/><circle cx="4.9" cy="11.9" r="1.1" fill="#4a90d9"/><circle cx="12.9" cy="11.9" r="1.1" fill="#4a90d9"/></svg><svg class="ic-info" width="14.2" height="14.2" viewBox="0 0 15 15"><circle cx="7.5" cy="7.5" r="6.9" fill="url(#g-info)" stroke="#a9c9e6" stroke-width="0.8"/><rect x="6.6" y="3.4" width="1.9" height="1.9" fill="#2f5f9f"/><rect x="6.6" y="6.4" width="1.9" height="5" fill="#2f5f9f"/></svg></div>
<div class="c c1" style="left:62px;width:83px"><span></span></div>
<div class="c c2" style="left:146px;width:34px"><span>16</span></div>
<div class="c c3" style="left:181px;width:83px"><span>CH10551</span></div>
<div class="c c4" style="left:265px;width:34px"><span>1</span></div>
<div class="c c5" style="left:300px;width:83px"><span>CH10551</span></div>
<div class="c c6" style="left:384px;width:174px"><span>BOLT</span></div>
<div class="c c7" style="left:559px;width:69px"><span></span></div>
<div class="c c8" style="left:629px;width:17px"><span></span></div>
</div>
</div>
<svg id="logo" width="47" height="54" viewBox="940 560 47 54" font-family="'Liberation Sans',sans-serif">
<g fill="none" stroke="#10529f" stroke-width="3">
<ellipse cx="955.9" cy="573.8" rx="6.5" ry="6.9"/>
<ellipse cx="971.7" cy="573.8" rx="6.5" ry="6.9"/>
<ellipse cx="955.9" cy="591.4" rx="6.5" ry="6.9"/>
<ellipse cx="971.7" cy="591.4" rx="6.5" ry="6.9"/>
<path d="M951.6 578.2 L960.6 569 M976 578.2 L967 569 M951.6 586.6 L960.6 595.8 M976 586.6 L967 595.8" stroke-width="2.3"/>
</g>
<path d="M963.8 565.2 L965.6 568 L963.8 571 L962 568Z M963.8 593.8 L965.6 596.8 L963.8 599.6 L962 596.8Z M947.2 582.4 L950.4 580.6 L953.4 582.4 L950.4 584.2Z M980.4 582.4 L977.2 580.6 L974.2 582.4 L977.2 584.2Z" fill="#10529f"/>
<text x="945.4" y="611.4" font-size="11.6" font-weight="bold" fill="#10529f" letter-spacing="-0.62">Perkins</text>
<text x="982.6" y="606.6" font-size="3" fill="#10529f">®</text>
</svg>
</div>
</body>
</html>
